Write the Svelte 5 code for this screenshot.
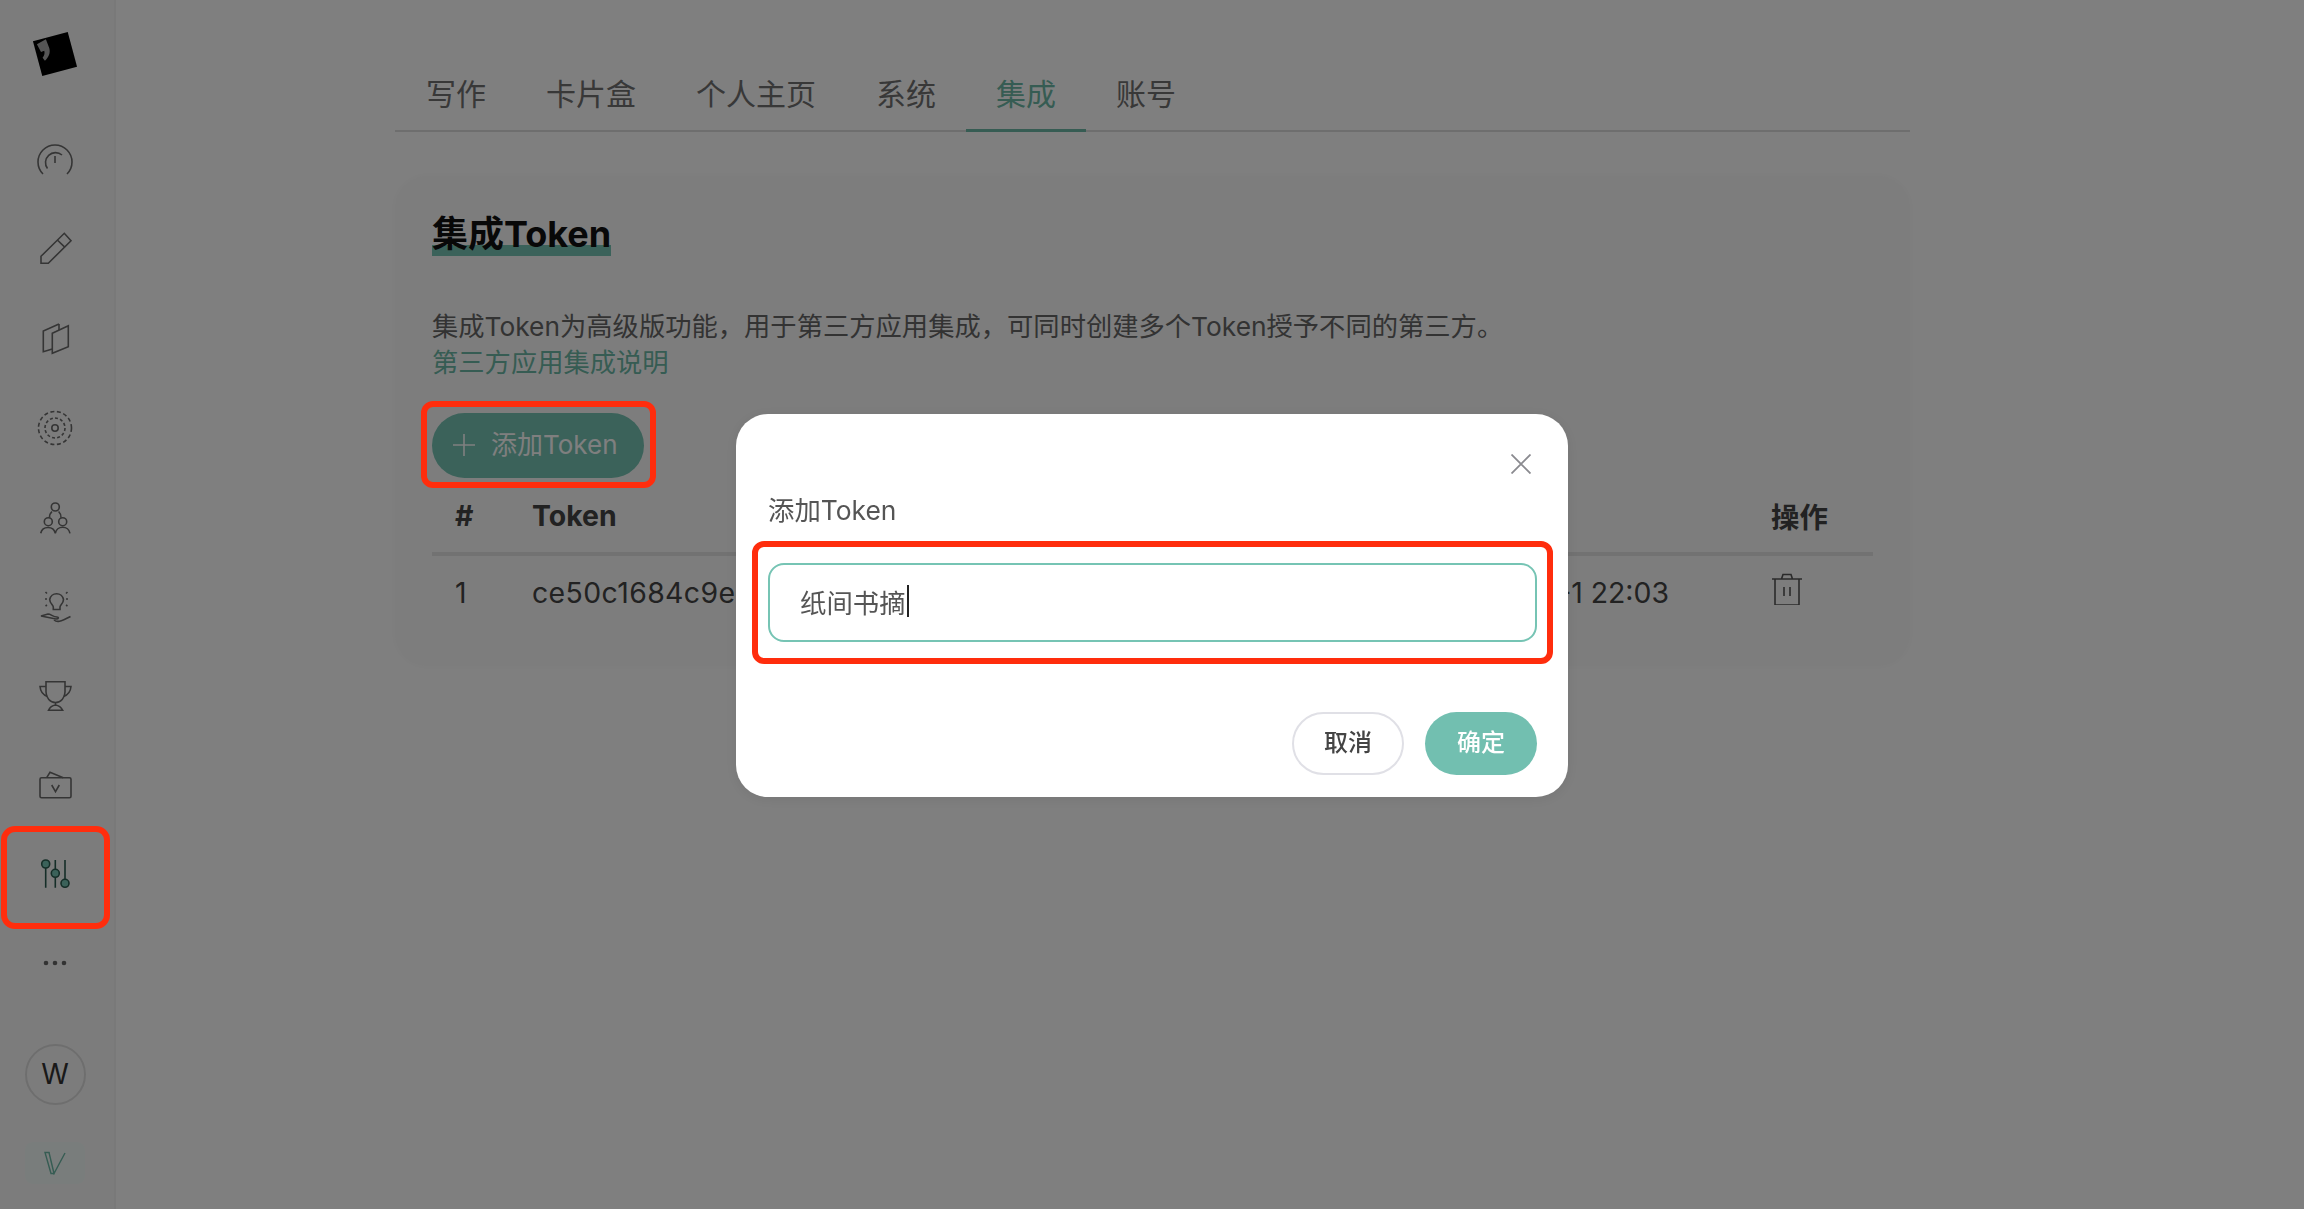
<script>
	const tabs = ['写作', '卡片盒', '个人主页', '系统', '集成', '账号'];
	const activeTab = '集成';
</script>

<div class="layout">
	<aside class="sidebar">
		<div class="logo">
			<svg viewBox="0 0 40 40" width="40" height="40">
				<rect x="2" y="2" width="36" height="36" fill="#000" />
				<path d="M5 6 L15 3.5 L16 13 C16 18 13 21.5 8.5 24 L7 20.5 C9.5 18.5 10.5 16.5 10.5 14 L7 14.5 Z" fill="#aaa" />
			</svg>
		</div>
		<nav class="nav">
			<span class="nav-item">
				<svg viewBox="0 0 40 40" class="ico"><path d="M8 34 A17 17 0 1 1 32 34" /><path d="M12.5 28.6 A10 10 0 0 1 27 15" /><path d="M20 16 V23" /></svg>
			</span>
			<span class="nav-item">
				<svg viewBox="0 0 40 40" class="ico"><path d="M6 27.3 V34.3 H13.3 L36 11.7 L29.3 4.3 Z" /><path d="M22.3 11 L30 18.3" /></svg>
			</span>
			<span class="nav-item">
				<svg viewBox="0 0 40 40" class="ico"><path d="M24 6 L8.3 13 V33.7 L17.3 31" /><path d="M24 6 V12" /><path d="M17.3 15.3 L33.3 7.7 V28.7 L17.3 35.3 Z" /></svg>
			</span>
			<span class="nav-item">
				<svg viewBox="0 0 40 40" class="ico"><circle cx="20" cy="20" r="16.5" stroke-dasharray="4 2.6" /><circle cx="20" cy="20" r="10" stroke-dasharray="3 2.2" /><circle cx="20" cy="20" r="3.2" /></svg>
			</span>
			<span class="nav-item">
				<svg viewBox="0 0 40 40" class="ico">
					<circle cx="20.3" cy="10" r="4" /><circle cx="13.3" cy="24.7" r="4" /><circle cx="27.7" cy="24.7" r="4" />
					<path d="M14.5 20.7 A8 8 0 0 1 17 14.5" /><path d="M23.6 14.5 A8 8 0 0 1 26 20.7" />
					<path d="M5.7 36.3 A7.5 7.5 0 0 1 20.3 36.3 A7.5 7.5 0 0 1 35 36.3" />
				</svg>
			</span>
			<span class="nav-item">
				<svg viewBox="0 0 40 40" class="ico">
					<path d="M18.3 23.5 H25 V21 C25 19 28.5 17.5 28.5 13.5 A7 7 0 0 0 14.7 13.5 C14.7 17.5 18.3 19 18.3 21 Z" />
					<path d="M10 13 H12 M10.5 6 L12 7.5 M31 13 H33 M32.5 6 L31 7.5 M10.5 20 L12 19 M32.5 20 L31 19" />
					<path d="M6 30 L13 28 C16 28 18 31 22 31 C24 31 24 33 21 33 L6 30 Z" />
					<path d="M19 34 C22 36.5 25 36 35.5 30.5" />
				</svg>
			</span>
			<span class="nav-item">
				<svg viewBox="0 0 40 40" class="ico">
					<path d="M11 6.7 H30 V17 A9.5 10.5 0 0 1 11 17 Z" />
					<path d="M11 11.5 H5 C5.5 17 8 20 12.5 21.5 M30 11.5 H36 C35.5 17 33 20 28.5 21.5" />
					<path d="M20.5 27.5 V30 C17 30.5 15 32 13.5 35.3 H27.7 C26 32 24 30.5 20.5 30" />
				</svg>
			</span>
			<span class="nav-item">
				<svg viewBox="0 0 40 40" class="ico">
					<rect x="5" y="12.7" width="31" height="20" rx="1.5" />
					<path d="M11.7 12.7 L15 7.3 L28.3 12.7" />
					<path d="M16.7 20 L20.5 26.7 L24.3 20" />
				</svg>
			</span>
			<span class="nav-item">
				<svg viewBox="0 0 40 40" class="ico ico-active">
					<path d="M10.7 10 V33.7 M20.3 6 V33.7 M30 6 V33.7" />
					<circle cx="10.7" cy="10" r="4" /><circle cx="20.3" cy="19.3" r="4" /><circle cx="30" cy="29.3" r="4" />
				</svg>
			</span>
			<span class="nav-item">
				<svg viewBox="0 0 40 40" class="ico-dots"><circle cx="11" cy="20" r="2.3" /><circle cx="20" cy="20" r="2.3" /><circle cx="29" cy="20" r="2.3" /></svg>
			</span>
		</nav>
		<div class="avatar">W</div>
		<div class="version">
			<svg viewBox="0 0 24 24" width="24" height="24"><path d="M2 1.5 H6 L11 22.5 H8 Z M6 1.5 L11 22.5 L22 2" /></svg>
		</div>
	</aside>

	<main class="main">
		<div class="tabs">
			{#each tabs as tab}
				<span class="tab" class:active={tab === activeTab}>{tab}</span>
			{/each}
		</div>

		<section class="card">
			<h2 class="title"><span>集成Token</span></h2>
			<p class="desc">集成Token为高级版功能，用于第三方应用集成，可同时创建多个Token授予不同的第三方。</p>
			<a class="link" href="#docs">第三方应用集成说明</a>
			<button class="add-btn">
				<svg viewBox="0 0 22 22" width="22" height="22"><path d="M11 0 V22 M0 11 H22" /></svg>
				<span>添加Token</span>
			</button>
			<div class="table-row table-head">
				<span class="cell-index">#</span>
				<span>Token</span>
				<span></span>
				<span>操作</span>
			</div>
			<div class="table-row table-body">
				<span class="cell-index">1</span>
				<span class="token">ce50c1684c9e</span>
				<span class="date">2023-8-1 22:03</span>
				<span class="trash">
					<svg viewBox="0 0 32 32" width="32" height="32">
						<path d="M1 6 H31 M4 6 V32 H28 V6 M10.5 6 L12 1.5 H20 L21.5 6 M13 14 V23 M19 14 V23" />
					</svg>
				</span>
			</div>
		</section>
	</main>
</div>

<div class="overlay">
	<div class="modal">
		<button class="close" aria-label="关闭">
			<svg viewBox="0 0 20 20" width="20" height="20"><path d="M0.5 0.5 L19.5 19.5 M19.5 0.5 L0.5 19.5" /></svg>
		</button>
		<div class="modal-title">添加Token</div>
		<div class="input"><span>纸间书摘</span><i class="caret"></i></div>
		<div class="modal-foot">
			<button class="btn btn-cancel">取消</button>
			<button class="btn btn-ok">确定</button>
		</div>
	</div>
</div>

<div class="mark mark-nav"></div>
<div class="mark mark-add"></div>
<div class="mark mark-input"></div>

<style>
	:global(body) {
		margin: 0;
		background: #fff;
		font-family: Inter, "Noto Sans CJK SC", sans-serif;
	}

	.layout {
		display: flex;
		height: 1209px;
		overflow: hidden;
	}

	.sidebar {
		width: 116px;
		box-sizing: border-box;
		padding-right: 4px;
		flex-shrink: 0;
		display: flex;
		flex-direction: column;
		align-items: center;
		background: #f9f9f9;
		border-right: 2px solid #f3f3f3;
	}

	.logo {
		height: 115px;
		display: flex;
		align-items: center;
		justify-content: center;
	}

	.logo svg {
		transform: translate(0, -4px) rotate(-15deg);
	}

	.nav {
		display: flex;
		flex-direction: column;
		align-items: center;
	}

	.nav-item {
		height: 89.3px;
		display: flex;
		align-items: center;
		justify-content: center;
	}

	.ico {
		width: 40px;
		height: 40px;
		fill: none;
		stroke: #6a6a6a;
		stroke-width: 1.6;
	}

	.ico-active {
		stroke: #2a5c50;
	}

	.ico-active circle {
		fill: #76c4b4;
	}

	.ico-dots {
		width: 40px;
		height: 40px;
		fill: #666;
	}

	.avatar {
		margin-top: 36px;
		width: 57px;
		height: 57px;
		border: 2px solid #ddd;
		border-radius: 50%;
		display: flex;
		align-items: center;
		justify-content: center;
		font-size: 28px;
		color: #333;
	}

	.version {
		margin-top: 37px;
		width: 60px;
		height: 42px;
		border-radius: 8px;
		background: #f3fbf8;
		display: flex;
		align-items: center;
		justify-content: center;
	}

	.version svg {
		fill: none;
		stroke: #6cb8a6;
		stroke-width: 1.4;
	}

	.main {
		flex: 1;
		padding: 63px 0 0 279px;
	}

	.tabs {
		width: 1515px;
		display: flex;
		border-bottom: 2px solid #dcdcdc;
	}

	.tab {
		padding: 0 30px 4px;
		line-height: 62px;
		font-size: 30px;
		color: #707070;
		margin-bottom: -2px;
		border-bottom: 3px solid transparent;
	}

	.tab:first-child {
		padding-left: 31px;
	}

	.tab.active {
		color: #6cb8a6;
		border-bottom-color: #6cb8a6;
	}

	.card {
		width: 1515px;
		box-sizing: border-box;
		margin-top: 44px;
		padding: 33px 37px 38px;
		background: #fbfbfb;
		border-radius: 32px;
		box-shadow: 0 0 8px rgba(0, 0, 0, 0.03);
	}

	.title {
		margin: 0;
		font-size: 36px;
		line-height: 50px;
		font-weight: 700;
		color: #111;
	}

	.title span {
		display: inline-block;
		background: linear-gradient(transparent 36px, #76c4b4 36px, #76c4b4 47px, transparent 47px);
	}

	.desc {
		margin: 50px 0 0;
		font-size: 26.3px;
		line-height: 36px;
		color: #666;
	}

	.link {
		display: block;
		font-size: 26.3px;
		line-height: 36px;
		color: #6cb8a6;
		text-decoration: none;
	}

	.add-btn {
		margin-top: 32px;
		width: 212px;
		height: 65px;
		padding: 0 0 6px 21px;
		display: flex;
		align-items: center;
		gap: 16px;
		border: 0;
		border-radius: 33px;
		background: #76c4b4;
		color: #fff;
		font: inherit;
		font-size: 26px;
	}

	.add-btn svg {
		fill: none;
		stroke: #fff;
		stroke-width: 1.6;
		margin-top: 5px;
	}

	.table-row {
		display: grid;
		grid-template-columns: 100px 1fr 240px 102px;
		align-items: center;
		font-size: 28.4px;
		color: #444;
		white-space: nowrap;
	}

	.table-head {
		height: 74px;
		font-weight: 700;
		border-bottom: 4px solid #e4e4e4;
	}

	.table-body {
		height: 72px;
	}

	.cell-index {
		padding-left: 23px;
	}

	.token {
		letter-spacing: 0.4px;
	}

	.date {
		justify-self: end;
		padding-right: 102px;
	}

	.trash {
		display: flex;
		margin-top: -6px;
	}

	.trash svg {
		fill: none;
		stroke: #555;
		stroke-width: 1.6;
	}

	.overlay {
		position: fixed;
		inset: 0;
		display: flex;
		align-items: center;
		justify-content: center;
		padding-top: 1px;
		background: rgba(0, 0, 0, 0.5);
	}

	.modal {
		position: relative;
		width: 832px;
		box-sizing: border-box;
		padding: 76px 31px 22px 32px;
		background: #fff;
		border-radius: 32px;
		box-shadow: 0 2px 14px rgba(0, 0, 0, 0.08);
	}

	.close {
		position: absolute;
		top: 40px;
		right: 37px;
		padding: 0;
		width: 20px;
		height: 20px;
		border: 0;
		background: none;
	}

	.close svg {
		display: block;
		fill: none;
		stroke: #8a8a8f;
		stroke-width: 1.8;
	}

	.modal-title {
		font-size: 26.4px;
		line-height: 40px;
		color: #555;
	}

	.input {
		margin-top: 33px;
		height: 79px;
		box-sizing: border-box;
		padding: 0 0 2px 30px;
		display: flex;
		align-items: center;
		border: 2px solid #76c4b4;
		border-radius: 16px;
		font-size: 26.4px;
		color: #555;
	}

	.caret {
		width: 2px;
		height: 32px;
		margin-left: 1px;
		background: #222;
	}

	.modal-foot {
		margin-top: 70px;
		display: flex;
		justify-content: flex-end;
		gap: 21px;
	}

	.btn {
		width: 112px;
		height: 63px;
		border-radius: 32px;
		font: inherit;
		font-size: 24px;
		font-weight: 500;
		padding: 0 0 5px;
	}

	.btn-cancel {
		background: #fff;
		border: 2px solid #e0e0e6;
		color: #444;
	}

	.btn-ok {
		background: #72bfb0;
		border: 0;
		color: #fff;
	}

	.mark {
		position: fixed;
		box-sizing: border-box;
		border: 6px solid #ff2d0d;
		border-radius: 12px;
	}

	.mark-nav {
		left: 1px;
		top: 826px;
		width: 109px;
		height: 103px;
		border-radius: 14px;
	}

	.mark-add {
		left: 421px;
		top: 401px;
		width: 235px;
		height: 87px;
	}

	.mark-input {
		left: 752px;
		top: 541px;
		width: 801px;
		height: 123px;
	}
</style>
